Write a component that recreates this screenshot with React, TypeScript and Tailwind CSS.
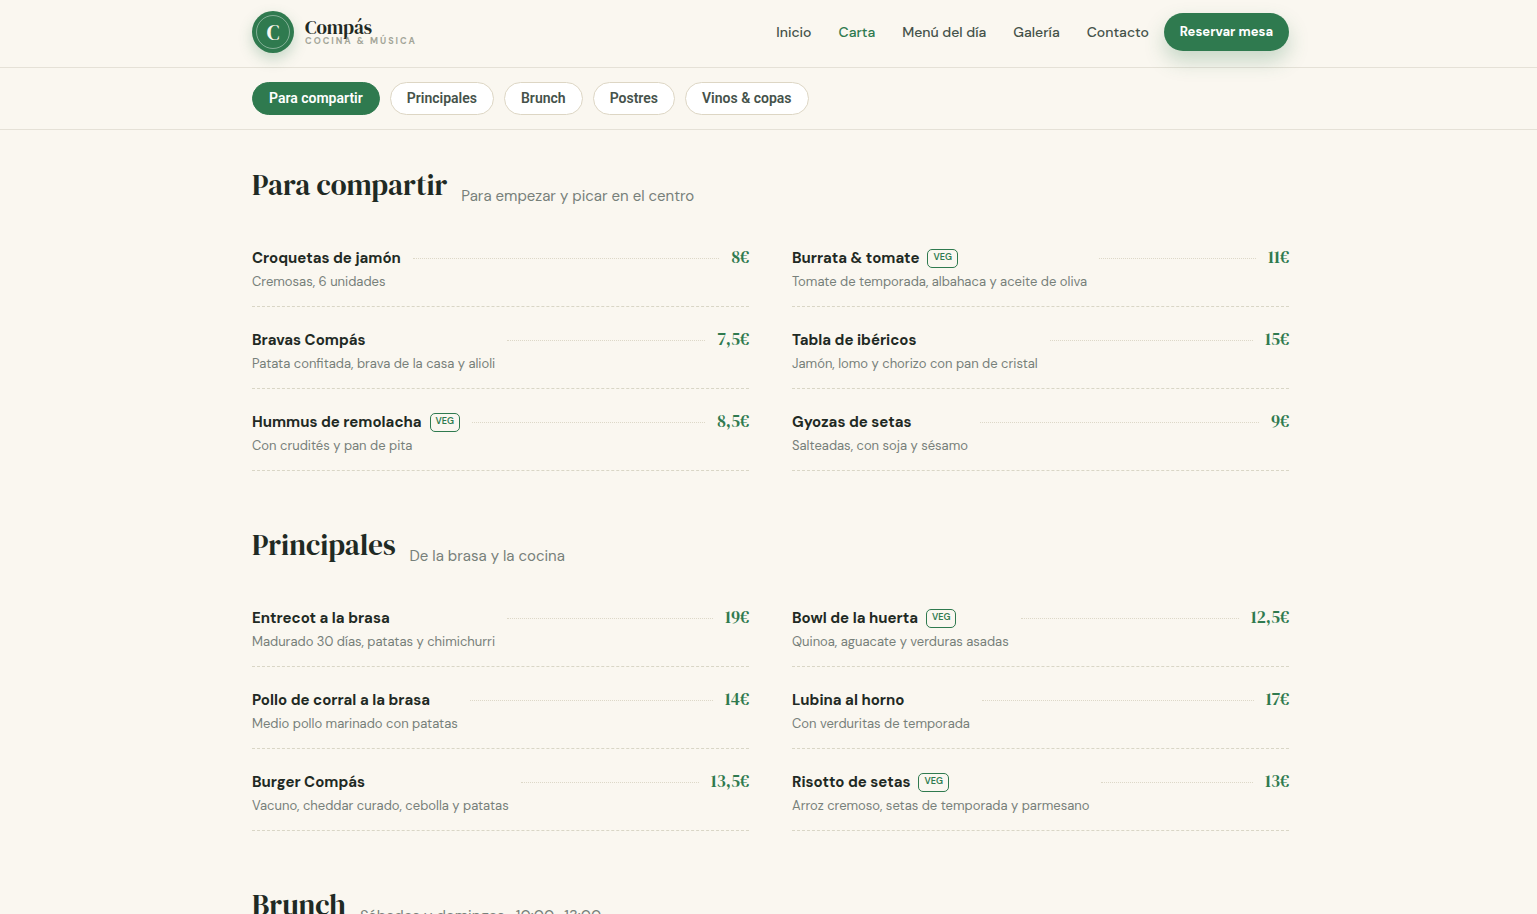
type Dish = { name: string; desc: string; price: string; veg?: boolean };
type Section = { id: string; title: string; note: string; dishes: Dish[] };

const nav = ["Inicio", "Carta", "Menú del día", "Galería", "Contacto"];
const tabs = ["Para compartir", "Principales", "Brunch", "Postres", "Vinos & copas"];

const sections: Section[] = [
  {
    id: "compartir",
    title: "Para compartir",
    note: "Para empezar y picar en el centro",
    dishes: [
      { name: "Croquetas de jamón", desc: "Cremosas, 6 unidades", price: "8€" },
      { name: "Burrata & tomate", desc: "Tomate de temporada, albahaca y aceite de oliva", price: "11€", veg: true },
      { name: "Bravas Compás", desc: "Patata confitada, brava de la casa y alioli", price: "7,5€" },
      { name: "Tabla de ibéricos", desc: "Jamón, lomo y chorizo con pan de cristal", price: "15€" },
      { name: "Hummus de remolacha", desc: "Con crudités y pan de pita", price: "8,5€", veg: true },
      { name: "Gyozas de setas", desc: "Salteadas, con soja y sésamo", price: "9€" },
    ],
  },
  {
    id: "principales",
    title: "Principales",
    note: "De la brasa y la cocina",
    dishes: [
      { name: "Entrecot a la brasa", desc: "Madurado 30 días, patatas y chimichurri", price: "19€" },
      { name: "Bowl de la huerta", desc: "Quinoa, aguacate y verduras asadas", price: "12,5€", veg: true },
      { name: "Pollo de corral a la brasa", desc: "Medio pollo marinado con patatas", price: "14€" },
      { name: "Lubina al horno", desc: "Con verduritas de temporada", price: "17€" },
      { name: "Burger Compás", desc: "Vacuno, cheddar curado, cebolla y patatas", price: "13,5€" },
      { name: "Risotto de setas", desc: "Arroz cremoso, setas de temporada y parmesano", price: "13€", veg: true },
    ],
  },
  { id: "brunch", title: "Brunch", note: "Sábados y domingos · 10:00–13:00", dishes: [] },
];

const container = "mx-auto w-full max-w-[1041px] pl-1";
const serif = "font-['DM_Serif_Display','Liberation_Serif',serif] font-normal";

function Logo() {
  return (
    <a href="#inicio" className="flex items-center gap-[11px]">
      <span className="flex size-[42px] items-center justify-center rounded-full bg-[#2f7a4f] p-1 shadow-[0_6px_14px_rgba(47,122,79,0.25)]">
        <span className={`flex size-full items-center justify-center rounded-full border border-white/40 text-[21px] leading-none text-[#faf7f0] ${serif}`}>
          C
        </span>
      </span>
      <span className="flex flex-col pb-[2px]">
        <span className={`text-[19px] leading-[19px] text-[#1f2a24] ${serif}`}>Compás</span>
        <span className="text-[9px] leading-2 font-bold tracking-[2px] text-[#a3a598]">COCINA &amp; MÚSICA</span>
      </span>
    </a>
  );
}

function DishRow({ dish }: { dish: Dish }) {
  return (
    <li className="flex h-[82px] items-start gap-3 border-b border-dashed border-[#d9d6c6] pt-[21px]">
      <div>
        <h3 className="flex h-6 items-center gap-2 text-[15px] font-bold text-[#1f2a24]">
          {dish.name}
          {dish.veg && (
            <span className="flex h-[19px] items-center rounded-[5px] border border-[#2f7a4f] px-[5px] text-[9px] font-semibold text-[#2f7a4f]">
              VEG
            </span>
          )}
        </h3>
        <p className="text-[13px] leading-6 text-[#77807a]">{dish.desc}</p>
      </div>
      <span className="mt-3 flex-1 border-b border-dotted border-[#ddd8c8]" />
      <span className={`text-[17px] leading-[23px] text-[#2f7a4f] ${serif}`}>{dish.price}</span>
    </li>
  );
}

export default function App() {
  return (
    <div className="min-h-screen bg-[#faf7f0] font-['DM_Sans','Inter',sans-serif]">
      <header className="border-b border-[#e5e1d7]">
        <div className={`${container} flex h-[67px] items-center justify-between pb-[3px]`}>
          <Logo />
          <div className="flex items-center gap-[15px]">
            <nav className="flex gap-[27px] text-[14px] font-medium text-[#45524a]">
              {nav.map((item) => (
                <a key={item} href="#" className={item === "Carta" ? "text-[#2f7a4f]" : ""}>
                  {item}
                </a>
              ))}
            </nav>
            <button className="h-[38px] rounded-full bg-[#2f7a4f] px-4 text-[13px] font-bold text-white shadow-[0_10px_20px_rgba(47,122,79,0.25)]">
              Reservar mesa
            </button>
          </div>
        </div>
      </header>
      <div className="border-b border-[#e5e1d7]">
        <div className={`${container} flex h-[61px] items-center gap-[10px]`}>
          {tabs.map((tab, i) => (
            <button
              key={tab}
              className={`h-[33px] rounded-full border px-4 font-['Roboto','Liberation_Sans',sans-serif] text-[14px] font-semibold ${
                i === 0 ? "border-[#2f7a4f] bg-[#2f7a4f] text-white" : "border-[#ddd6c4] bg-white text-[#45524a]"
              }`}
            >
              {tab}
            </button>
          ))}
        </div>
      </div>
      <main className={container}>
        {sections.map((s) => (
          <section key={s.id} className="pt-9">
            <div className="flex h-[59px] items-start gap-[14px]">
              <h2 className={`text-[29px] leading-[38px] text-[#1f2a24] ${serif}`}>{s.title}</h2>
              <p className="pt-[18px] text-[15px] leading-6 text-[#77807a]">{s.note}</p>
            </div>
            <ul className="grid grid-cols-2 gap-x-[43px] pb-[19px]">
              {s.dishes.map((d) => (
                <DishRow key={d.name} dish={d} />
              ))}
            </ul>
          </section>
        ))}
      </main>
    </div>
  );
}
